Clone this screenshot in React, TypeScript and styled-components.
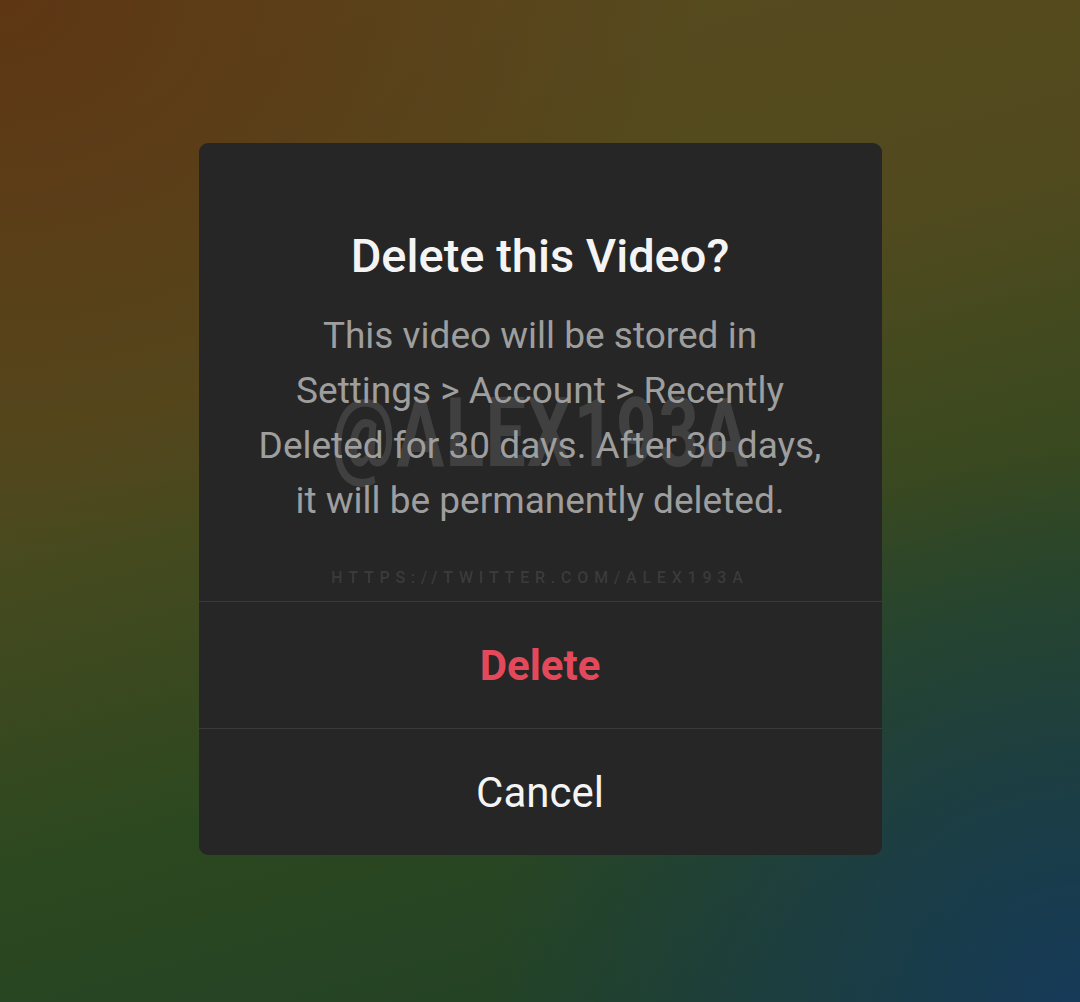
import React from 'react';
import styled, {createGlobalStyle} from 'styled-components';

const GlobalStyle = createGlobalStyle`
	html, body {
		margin: 0;
		padding: 0;
	}
	body {
		font-family: Roboto, "Noto Sans", sans-serif;
	}
`;

const Backdrop = styled.div`
	width: 1080px;
	height: 1002px;
	display: flex;
	justify-content: center;
	padding-top: 143px;
	box-sizing: border-box;
	background:
		radial-gradient(ellipse 55% 55% at 100% 100%, rgba(22, 58, 88, 1), rgba(22, 58, 88, 0)),
		radial-gradient(ellipse 65% 55% at 0% 0%, rgba(94, 54, 20, 1), rgba(94, 54, 20, 0)),
		linear-gradient(165deg, #5a4a20 0%, #514a1e 35%, #2c4820 68%, #1f4028 100%);
`;

const Dialog = styled.div`
	width: 683px;
	height: 712px;
	background: #262626;
	border-radius: 9px;
	overflow: hidden;
	display: flex;
	flex-direction: column;
`;

const Content = styled.div`
	position: relative;
	height: 458px;
	box-sizing: border-box;
	padding-top: 85px;
	display: flex;
	flex-direction: column;
	align-items: center;
`;

const Title = styled.h1`
	margin: 0;
	font-size: 47px;
	line-height: 56px;
	font-weight: 500;
	color: #f4f4f4;
	text-align: center;
`;

const Body = styled.p`
	margin: 24px 0 0;
	font-size: 37px;
	line-height: 55px;
	font-weight: 400;
	color: #9e9e9e;
	text-align: center;
	position: relative;
	z-index: 1;
`;

const Watermark = styled.div`
	position: absolute;
	top: 242px;
	left: 0;
	right: 0;
	text-align: center;
	font-size: 96px;
	line-height: 96px;
	font-weight: 700;
	letter-spacing: 2px;
	color: rgba(255, 255, 255, 0.12);
	transform: scaleX(0.74);
	pointer-events: none;
`;

const UrlMark = styled.div`
	position: absolute;
	top: 425px;
	left: 0;
	right: 0;
	text-align: center;
	font-size: 16px;
	letter-spacing: 5.8px;
	font-weight: 500;
	color: rgba(255, 255, 255, 0.11);
`;

const Action = styled.button<{$danger?: boolean}>`
	height: 127px;
	border: none;
	border-top: 1px solid #3a3a3a;
	background: transparent;
	font-family: Roboto, "Noto Sans", sans-serif;
	font-size: 42px;
	font-weight: ${(p) => (p.$danger ? 700 : 400)};
	color: ${(p) => (p.$danger ? '#e3495a' : '#f4f4f4')};
	display: flex;
	align-items: center;
	justify-content: center;
	padding: 0;
`;

const App = () => {
	return (
		<>
			<GlobalStyle />
			<Backdrop>
				<Dialog>
					<Content>
						<Watermark>@ALEX193A</Watermark>
						<Title>Delete this Video?</Title>
						<Body>
							This video will be stored in
							<br />
							Settings &gt; Account &gt; Recently
							<br />
							Deleted for 30 days. After 30 days,
							<br />
							it will be permanently deleted.
						</Body>
						<UrlMark>HTTPS://TWITTER.COM/ALEX193A</UrlMark>
					</Content>
					<Action $danger>Delete</Action>
					<Action>Cancel</Action>
				</Dialog>
			</Backdrop>
		</>
	);
};

export default App;
